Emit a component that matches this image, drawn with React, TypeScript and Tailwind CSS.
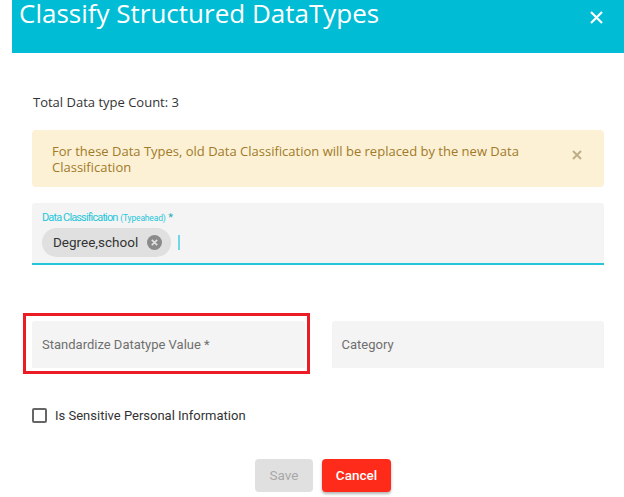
export default function App() {
  return (
    <div className="w-[624px] h-[497px] bg-white overflow-hidden font-['Roboto',sans-serif]">
      {/* header */}
      <div className="ml-[12px] h-[53px] bg-[#00bcd4] flex justify-between items-start">
        <h1 className="pl-[7px] text-[26px] leading-none text-white font-['Open_Sans',sans-serif]">
          Classify Structured DataTypes
        </h1>
        <svg className="mt-[11px] mr-[21px]" width="13" height="13" viewBox="0 0 13 13">
          <path d="M1 1L12 12M12 1L1 12" stroke="white" strokeWidth="2.2" />
        </svg>
      </div>

      <div className="px-[32px] w-[636px]">
        <p className="mt-[41px] text-[13px] leading-[16px] text-[#333] font-['Open_Sans',sans-serif] pl-[1px]">
          Total Data type Count: 3
        </p>

        {/* alert */}
        <div className="mt-[20px] w-[572px] h-[57px] rounded-[4px] bg-[#fcf1d4] flex items-center pl-[20px]">
          <p className="w-[490px] text-[13px] leading-[16px] text-[#a17a2a] font-['Open_Sans',sans-serif]">
            For these Data Types, old Data Classification will be replaced by the new Data Classification
          </p>
          <svg className="ml-[30px] -mt-[8px]" width="10" height="10" viewBox="0 0 10 10">
            <path d="M1 1L9 9M9 1L1 9" stroke="#bfae85" strokeWidth="2" />
          </svg>
        </div>

        {/* typeahead */}
        <div className="mt-[16px] w-[572px] h-[62px] bg-[#f4f4f4] rounded-t-[3px] border-b-2 border-[#26c6da] px-[10px] pt-[8px]">
          <div className="text-[11px] leading-[14px] text-[#26c6da] whitespace-nowrap">
            <span className="tracking-[-0.08em]">Data Classification</span>{' '}
            <span className="text-[8.5px] tracking-[-0.02em]">(Typeahead)</span>{' '}
            <span className="text-[#2aa9b8]">*</span>
          </div>
          <div className="mt-[3px] flex items-center">
            <span className="h-[29px] rounded-full bg-[#e0e0e0] pl-[11px] pr-[9px] flex items-center gap-[9px] text-[13.5px] text-[#333]">
              Degree,school
              <svg width="15" height="15" viewBox="0 0 14 14">
                <circle cx="7" cy="7" r="7" fill="#8a8a8a" />
                <path d="M4.5 4.5L9.5 9.5M9.5 4.5L4.5 9.5" stroke="#e0e0e0" strokeWidth="1.6" />
              </svg>
            </span>
            <span className="ml-[7px] w-[1.5px] h-[15px] bg-[#6fd6e3]" />
          </div>
        </div>

        {/* fields */}
        <div className="mt-[56px] grid grid-cols-2 gap-x-[27px]">
          <div className="relative">
            <div className="h-[47px] bg-[#f4f4f4] rounded-t-[3px] flex items-center pl-[10px] text-[13px] text-[#6f6f6f]">
              Standardize Datatype Value *
            </div>
            <span className="absolute -left-[9px] -top-[8px] -right-[5px] -bottom-[6px] border-[3px] border-[#ec1c24]" />
          </div>
          <div className="h-[47px] bg-[#f4f4f4] rounded-t-[3px] flex items-center pl-[10px] text-[13px] text-[#6f6f6f]">
            Category
          </div>
        </div>

        {/* checkbox */}
        <label className="mt-[38px] flex items-center gap-[8px] text-[13px] text-[#333]">
          <span className="w-[15px] h-[15px] border-2 border-[#666] rounded-[2px]" />
          Is Sensitive Personal Information
        </label>

        {/* buttons */}
        <div className="mt-[33px] flex justify-center gap-[9px] pl-[10px]">
          <button className="w-[58px] h-[33px] rounded-[4px] bg-[#e0e0e0] text-[13.5px] text-[#a8a8a8]">
            Save
          </button>
          <button className="w-[69px] h-[33px] rounded-[4px] bg-[#ff2b1a] text-[13.5px] font-medium text-white shadow-[0_2px_3px_rgba(0,0,0,0.3)]">
            Cancel
          </button>
        </div>
      </div>
    </div>
  );
}
